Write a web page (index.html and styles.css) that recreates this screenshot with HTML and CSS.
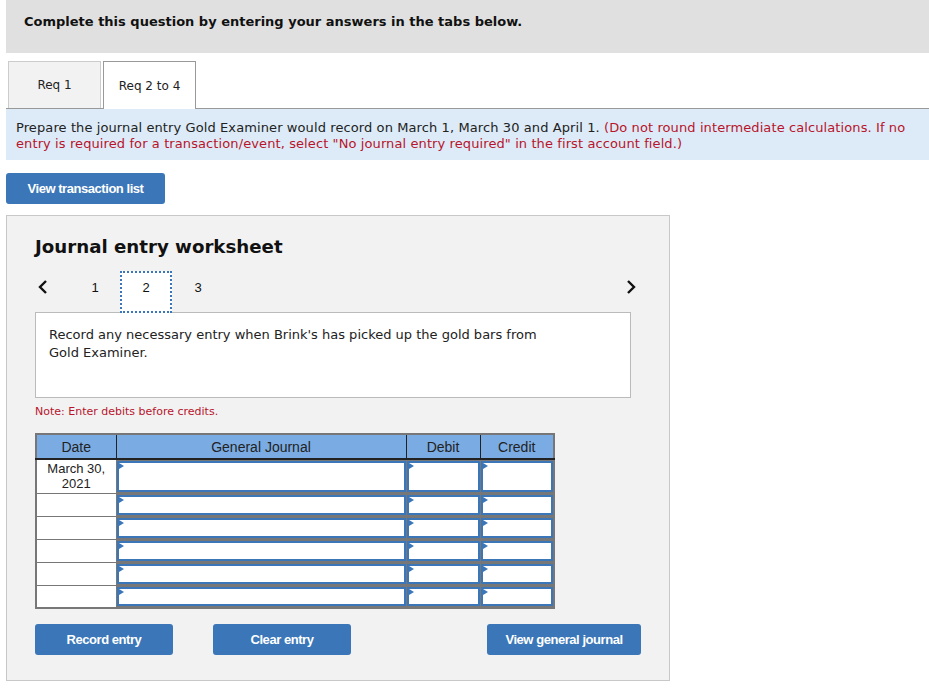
FILE: index.html
```html
<!DOCTYPE html>
<html>
<head>
<meta charset="utf-8">
<link rel="stylesheet" href="styles.css">
</head>
<body>
<div class="page">
  <div class="topbar">Complete this question by entering your answers in the tabs below.</div>
  <div class="tabs">
    <div class="tab">Req 1</div>
    <div class="tab active">Req 2 to 4</div>
  </div>
  <div class="instr">Prepare the journal entry Gold Examiner would record on March 1, March 30 and April 1. <span class="red">(Do not round intermediate calculations. If no entry is required for a transaction/event, select "No journal entry required" in the first account field.)</span></div>
  <button class="btn btn-list">View transaction list</button>
  <div class="panel">
    <h2 class="title">Journal entry worksheet</h2>
    <div class="nav">
      <span class="arrow left"><svg width="12" height="16" viewBox="0 0 12 16"><path d="M9 2 L3 8 L9 14" fill="none" stroke="#111" stroke-width="2.4"/></svg></span>
      <span class="num n1">1</span>
      <span class="num cur">2</span>
      <span class="num">3</span>
      <span class="spacer"></span>
      <span class="arrow right"><svg width="12" height="16" viewBox="0 0 12 16"><path d="M3 2 L9 8 L3 14" fill="none" stroke="#111" stroke-width="2.4"/></svg></span>
    </div>
    <div class="desc">Record any necessary entry when Brink's has picked up the gold bars from Gold Examiner.</div>
    <div class="note">Note: Enter debits before credits.</div>
    <table class="jt">
      <thead>
        <tr><th class="c-date">Date</th><th class="c-gj">General Journal</th><th class="c-dr">Debit</th><th class="c-cr">Credit</th></tr>
      </thead>
      <tbody>
        <tr class="r1"><td class="date">March 30,<br>2021</td><td class="in"><div class="box"></div></td><td class="in"><div class="box"></div></td><td class="in"><div class="box"></div></td></tr>
        <tr><td class="date"></td><td class="in"><div class="box"></div></td><td class="in"><div class="box"></div></td><td class="in"><div class="box"></div></td></tr>
        <tr><td class="date"></td><td class="in"><div class="box"></div></td><td class="in"><div class="box"></div></td><td class="in"><div class="box"></div></td></tr>
        <tr><td class="date"></td><td class="in"><div class="box"></div></td><td class="in"><div class="box"></div></td><td class="in"><div class="box"></div></td></tr>
        <tr><td class="date"></td><td class="in"><div class="box"></div></td><td class="in"><div class="box"></div></td><td class="in"><div class="box"></div></td></tr>
        <tr><td class="date"></td><td class="in"><div class="box"></div></td><td class="in"><div class="box"></div></td><td class="in"><div class="box"></div></td></tr>
      </tbody>
    </table>
    <div class="actions">
      <button class="btn btn-rec">Record entry</button>
      <button class="btn btn-clr">Clear entry</button>
      <span class="spacer"></span>
      <button class="btn btn-view">View general journal</button>
    </div>
  </div>
</div>
</body>
</html>
```
FILE: styles.css
```css
* { box-sizing: border-box; }
body { margin: 0; background: #fff; font-family: "DejaVu Sans", Verdana, sans-serif; color: #222; }
.page { padding-left: 6px; width: 929px; }
.topbar {
  height: 53px; background: #e0e0e0; font-weight: bold; font-size: 13px;
  padding: 14px 0 0 18px; color: #111;
}
.tabs { display: flex; margin-top: 8px; border-bottom: 1px solid #999; height: 48px; padding-left: 2px; }
.tab {
  width: 93px; height: 47px; background: #f2f2f2; border: 1px solid #ccc; border-bottom: none;
  font-size: 12px; display: flex; align-items: center; justify-content: center; margin-right: 2px; color: #222;
}
.tab.active { background: #fff; border-color: #999; height: 48px; margin-bottom: -1px; }
.instr {
  background: #dcebf7; font-size: 13px; line-height: 16px; padding: 11px 10px 8px 10px; height: 51px; color: #222;
  letter-spacing: 0.1px;
}
.red { color: #b8142c; }
.btn {
  border: none; border-radius: 3px; background: #3a76b8; color: #fff; font-weight: bold;
  font-family: "Liberation Sans", Arial, sans-serif; font-size: 13px; letter-spacing: -0.45px;
  height: 31px; padding: 0; cursor: pointer; display: flex; align-items: center; justify-content: center;
}
.btn-list { margin-top: 13px; width: 159px; }
.panel {
  margin-top: 11px; width: 664px; height: 466px; background: #f2f2f2; border: 1px solid #c8c8c8;
  padding: 19px 0 0 28px;
}
.title { margin: 0; font-size: 18.2px; font-weight: bold; color: #111; line-height: 24px; }
.nav { display: flex; align-items: flex-start; height: 42px; margin-top: 12px; width: 602px; position: relative; z-index: 1; }
.arrow { display: flex; align-items: center; padding-top: 8px; }
.arrow.left { margin-left: 2px; }
.num { font-family: "Liberation Sans", Arial, sans-serif; font-size: 13px; color: #111; width: 52px; text-align: center; padding-top: 9px; line-height: 15px; }
.num.n1 { margin-left: 20px; }
.num.cur { height: 42px; border: 2px dotted #3a76b8; background: #fff; padding-top: 7px; margin-left: -1px; }
.spacer { flex: 1; }
.desc {
  width: 596px; height: 86px; background: #fff; border: 1px solid #bbb; margin-top: -1px;
  font-size: 13px; line-height: 18px; padding: 13px 90px 0 13px; color: #222;
}
.note { font-size: 11px; color: #b8142c; margin-top: 7px; line-height: 14px; }
.jt {
  margin-top: 14px; border-collapse: collapse; border: 2px solid #777; table-layout: fixed;
  font-family: "Liberation Sans", Arial, sans-serif; font-size: 13px; width: 519px;
}
.jt th {
  background: #7aace3; height: 25px; font-weight: normal; font-size: 14px; color: #222;
  border-left: 1px solid #222; border-bottom: 2px solid #222; padding: 0;
}
.jt th:first-child { border-left: none; }
.c-date { width: 80px; }
.c-gj { width: 290px; }
.c-dr { width: 74px; }
.c-cr { width: 74px; }
.jt td { padding: 0; height: 23px; border: 1px solid #777; background: #fff; }
.jt tr.r1 td { height: 34px; }
.jt td.date { text-align: center; vertical-align: top; line-height: 15px; padding-top: 1px; color: #222; }
.jt td.in { background: #777; padding: 1px 0 1px 0; position: relative; }
.box { height: 100%; background: #fff; border: 2px solid #3a76b8; position: relative; }
.box::before {
  content: ""; position: absolute; left: 0; top: 0; width: 0; height: 0;
  border-top: 3px solid transparent; border-bottom: 3px solid transparent; border-left: 5px solid #3a76b8;
}
.actions { display: flex; margin-top: 15px; width: 606px; }
.btn-rec { width: 138px; }
.btn-clr { width: 138px; margin-left: 40px; }
.btn-view { width: 154px; }
```
